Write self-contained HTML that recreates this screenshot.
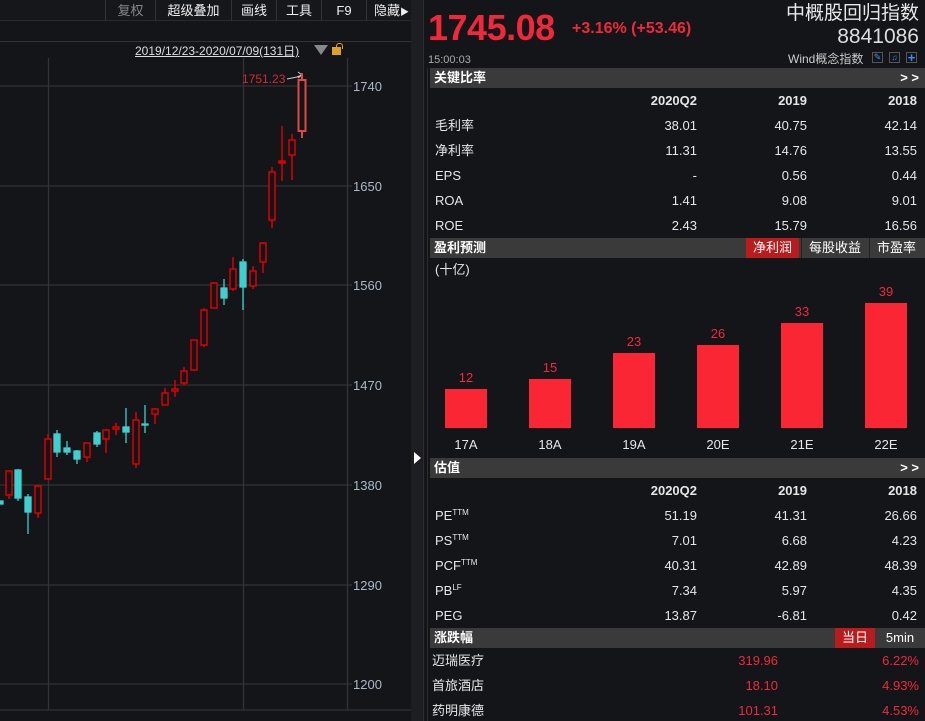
<!DOCTYPE html>
<html><head><meta charset="utf-8"><style>
*{margin:0;padding:0;box-sizing:border-box}
body{width:925px;height:721px;background:#131519;overflow:hidden;position:relative;font-family:"Liberation Sans","Noto Sans CJK SC",sans-serif;color:#e6e6e6;font-size:13px}
.a{position:absolute;white-space:nowrap;line-height:16px}
.bar{position:absolute;left:430px;width:495px;height:20px;background:#3a3a3a;font-weight:bold;font-size:13px;line-height:20px;padding-left:4px;color:#fff}
.r{text-align:right}
.tb{position:absolute;top:0;height:21px;line-height:21px;font-size:13px;color:#eee;text-align:center;border-left:1px solid #333}
sup{font-size:8px;line-height:0;vertical-align:5px}
</style></head><body>
<div class="a" style="left:0;top:0;width:411px;height:21px;background:#16171b;border-bottom:1px solid #2a2a2a"></div>
<div class="tb" style="left:105px;width:50px;color:#888">复权</div>
<div class="tb" style="left:155px;width:76px">超级叠加</div>
<div class="tb" style="left:231px;width:45px">画线</div>
<div class="tb" style="left:276px;width:45px">工具</div>
<div class="tb" style="left:321px;width:45px">F9</div>
<div class="tb" style="left:366px;width:45px;text-align:left;padding-left:7px">隐藏<span style="font-size:9px">▶</span></div>
<div class="a" style="left:0;top:21px;width:411px;height:21px;background:#131519;border-bottom:1px solid #333"></div>
<div class="a" style="left:135px;top:43px;font-size:12px;color:#ddd;text-decoration:underline">2019/12/23-2020/07/09(131日)</div>
<div class="a" style="left:314px;top:45px;width:0;height:0;border-left:7px solid transparent;border-right:7px solid transparent;border-top:10px solid #888"></div>
<div class="a" style="left:332px;top:47px;width:9px;height:8px;background:#e0a020"></div>
<div class="a" style="left:336px;top:43px;width:7px;height:6px;border:1.5px solid #e0a020;border-bottom:none;border-radius:3px 3px 0 0"></div>
<svg class="a" style="left:0;top:42px" width="411" height="679" viewBox="0 42 411 679">
<g stroke="#333" stroke-width="1.3">
<line x1="0" y1="86" x2="352" y2="86"/><line x1="0" y1="186" x2="352" y2="186"/><line x1="0" y1="285" x2="352" y2="285"/><line x1="0" y1="385" x2="352" y2="385"/><line x1="0" y1="485" x2="352" y2="485"/><line x1="0" y1="585" x2="352" y2="585"/><line x1="0" y1="684" x2="352" y2="684"/>
<line x1="48.5" y1="58" x2="48.5" y2="710"/><line x1="243.5" y1="58" x2="243.5" y2="710"/><line x1="347.5" y1="58" x2="347.5" y2="710"/>
<line x1="0" y1="710" x2="411" y2="710"/>
</g>
<g fill="#aab8c8" font-size="13" font-family="Liberation Sans">
<text x="353" y="91">1740</text><text x="353" y="191">1650</text><text x="353" y="290">1560</text><text x="353" y="390">1470</text><text x="353" y="490">1380</text><text x="353" y="590">1290</text><text x="353" y="689">1200</text>
</g>
<text x="242" y="83" fill="#d42a2a" font-size="12" font-family="Liberation Sans">1751.23</text>
<path d="M287 79 L297 77 L302 75 M298 72 L302 75 L298 78" stroke="#ccc" fill="none" stroke-width="1"/>
<g stroke="#d00" stroke-width="1.5" fill="none">
<line x1="9" y1="471" x2="9" y2="499"/><rect x="6" y="471" width="6" height="24" fill="#131519"/>
<line x1="38" y1="486" x2="38" y2="518"/><rect x="35" y="486" width="6" height="27" fill="#131519"/>
<line x1="48" y1="434" x2="48" y2="479"/><rect x="45" y="439" width="6" height="40" fill="#131519"/>
<line x1="87" y1="443" x2="87" y2="462"/><rect x="84" y="443" width="6" height="14" fill="#131519"/>
<line x1="106" y1="429" x2="106" y2="453"/><rect x="103" y="430" width="6" height="9" fill="#131519"/>
<line x1="116" y1="423" x2="116" y2="435"/><rect x="113" y="427" width="6" height="2" fill="#131519"/>
<line x1="136" y1="412" x2="136" y2="468"/><rect x="133" y="420" width="6" height="44" fill="#131519"/>
<line x1="155" y1="408" x2="155" y2="424"/><rect x="152" y="409" width="6" height="5" fill="#131519"/>
<line x1="165" y1="388" x2="165" y2="405"/><rect x="162" y="393" width="6" height="12" fill="#131519"/>
<line x1="175" y1="380" x2="175" y2="397"/><rect x="172" y="389" width="6" height="2" fill="#131519"/>
<line x1="184" y1="367" x2="184" y2="385"/><rect x="181" y="371" width="6" height="12" fill="#131519"/>
<line x1="194" y1="340" x2="194" y2="371"/><rect x="191" y="340" width="6" height="30" fill="#131519"/>
<line x1="204" y1="308" x2="204" y2="347"/><rect x="201" y="310" width="6" height="35" fill="#131519"/>
<line x1="214" y1="282" x2="214" y2="308"/><rect x="211" y="283" width="6" height="25" fill="#131519"/>
<line x1="233" y1="257" x2="233" y2="291"/><rect x="230" y="269" width="6" height="20" fill="#131519"/>
<line x1="253" y1="266" x2="253" y2="289"/><rect x="250" y="271" width="6" height="15" fill="#131519"/>
<line x1="263" y1="242" x2="263" y2="273"/><rect x="260" y="243" width="6" height="19" fill="#131519"/>
<line x1="272" y1="167" x2="272" y2="228"/><rect x="269" y="172" width="6" height="48" fill="#131519"/>
<line x1="282" y1="126" x2="282" y2="181"/><rect x="279" y="161" width="6" height="2" fill="#d00"/>
<line x1="292" y1="134" x2="292" y2="180"/><rect x="289" y="140" width="6" height="15" fill="#131519"/>
</g>
<g stroke="#e04848" stroke-width="2" fill="none"><line x1="302" y1="73" x2="302" y2="138"/><rect x="298.5" y="80" width="7" height="51" fill="#131519"/></g>
<g stroke="#3ecfcf" stroke-width="1.3" fill="#3ecfcf">
<rect x="-3" y="501" width="6" height="3"/>
<line x1="18" y1="469" x2="18" y2="501"/><rect x="15" y="470" width="6" height="28"/>
<line x1="28" y1="494" x2="28" y2="534"/><rect x="25" y="497" width="6" height="15"/>
<line x1="57" y1="430" x2="57" y2="457"/><rect x="54" y="434" width="6" height="18"/>
<line x1="67" y1="441" x2="67" y2="455"/><rect x="64" y="448" width="6" height="4"/>
<line x1="77" y1="450" x2="77" y2="464"/><rect x="74" y="451" width="6" height="8"/>
<line x1="97" y1="431" x2="97" y2="447"/><rect x="94" y="433" width="6" height="11"/>
<line x1="126" y1="408" x2="126" y2="443"/><rect x="123" y="427" width="6" height="5"/>
<line x1="145" y1="405" x2="145" y2="433"/><rect x="142" y="424" width="6" height="1"/>
<line x1="224" y1="279" x2="224" y2="305"/><rect x="221" y="288" width="6" height="10"/>
<line x1="243" y1="259" x2="243" y2="310"/><rect x="240" y="262" width="6" height="25"/>
</g>
</svg>
<div class="a" style="left:411px;top:0;width:12px;height:721px;background:#1d1e22"></div>
<div class="a" style="left:414px;top:452px;width:0;height:0;border-top:6px solid transparent;border-bottom:6px solid transparent;border-left:7px solid #fff"></div>
<div class="a" style="left:423px;top:0;width:1px;height:721px;background:#2c2c2c"></div>
<div class="a" style="left:427px;top:68px;width:1px;height:653px;background:#2c2c2c"></div>
<div class="a" style="left:428px;top:8px;font-size:36px;line-height:40px;font-weight:bold;color:#f0283a;letter-spacing:-0.5px">1745.08</div>
<div class="a" style="left:572px;top:19px;font-size:16px;line-height:20px;font-weight:bold;color:#f0283a">+3.16% (+53.46)</div>
<div class="a" style="left:428px;top:52px;font-size:11px;color:#aaa">15:00:03</div>
<div class="a r" style="right:6px;top:2px;font-size:19px;line-height:24px;color:#e8e8e8">中概股回归指数</div>
<div class="a r" style="right:6px;top:24px;font-size:21px;line-height:26px;color:#ddd">8841086</div>
<div class="a" style="left:788px;top:51px;font-size:12px;color:#ccc">Wind概念指数</div>
<div class="a" style="left:872px;top:52px;width:11px;height:11px;border:1px solid #555;color:#3a8eff;font-size:9px;line-height:9px;text-align:center">✎</div>
<div class="a" style="left:889px;top:52px;width:11px;height:11px;border:1px solid #555;color:#3a8eff;font-size:8px;line-height:9px;text-align:center">♫</div>
<div class="a" style="left:906px;top:52px;width:11px;height:11px;border:1px solid #555;color:#3a8eff;font-size:13px;font-weight:bold;line-height:9px;text-align:center">+</div>
<div class="bar" style="top:68px">关键比率<span style="position:absolute;right:6px">&gt; &gt;</span></div>
<div class="a r" style="right:228px;top:93px;font-weight:bold">2020Q2</div>
<div class="a r" style="right:118px;top:93px;font-weight:bold">2019</div>
<div class="a r" style="right:8px;top:93px;font-weight:bold">2018</div>
<div class="a" style="left:435px;top:118px">毛利率</div><div class="a r" style="right:228px;top:118px">38.01</div><div class="a r" style="right:118px;top:118px">40.75</div><div class="a r" style="right:8px;top:118px">42.14</div>
<div class="a" style="left:435px;top:143px">净利率</div><div class="a r" style="right:228px;top:143px">11.31</div><div class="a r" style="right:118px;top:143px">14.76</div><div class="a r" style="right:8px;top:143px">13.55</div>
<div class="a" style="left:435px;top:168px">EPS</div><div class="a r" style="right:228px;top:168px">-</div><div class="a r" style="right:118px;top:168px">0.56</div><div class="a r" style="right:8px;top:168px">0.44</div>
<div class="a" style="left:435px;top:193px">ROA</div><div class="a r" style="right:228px;top:193px">1.41</div><div class="a r" style="right:118px;top:193px">9.08</div><div class="a r" style="right:8px;top:193px">9.01</div>
<div class="a" style="left:435px;top:218px">ROE</div><div class="a r" style="right:228px;top:218px">2.43</div><div class="a r" style="right:118px;top:218px">15.79</div><div class="a r" style="right:8px;top:218px">16.56</div>
<div class="bar" style="top:238px">盈利预测</div>
<div class="a" style="left:746px;top:238px;width:53px;height:20px;background:#b81c1c;color:#fff;text-align:center;line-height:20px">净利润</div>
<div class="a" style="left:801px;top:238px;width:67px;height:20px;background:#3a3a3a;color:#fff;text-align:center;line-height:20px;border-left:1px solid #222">每股收益</div>
<div class="a" style="left:869px;top:238px;width:54px;height:20px;background:#3a3a3a;color:#fff;text-align:center;line-height:20px;border-left:1px solid #222">市盈率</div>
<div class="a" style="left:435px;top:262px">(十亿)</div>
<div class="a" style="left:445px;top:389px;width:42px;height:39px;background:#fa2633"></div>
<div class="a" style="left:529px;top:379px;width:42px;height:49px;background:#fa2633"></div>
<div class="a" style="left:613px;top:353px;width:42px;height:75px;background:#fa2633"></div>
<div class="a" style="left:697px;top:345px;width:42px;height:83px;background:#fa2633"></div>
<div class="a" style="left:781px;top:323px;width:42px;height:105px;background:#fa2633"></div>
<div class="a" style="left:865px;top:303px;width:42px;height:125px;background:#fa2633"></div>
<div class="a" style="left:445px;top:370px;width:42px;text-align:center;color:#f0283a">12</div>
<div class="a" style="left:529px;top:360px;width:42px;text-align:center;color:#f0283a">15</div>
<div class="a" style="left:613px;top:334px;width:42px;text-align:center;color:#f0283a">23</div>
<div class="a" style="left:697px;top:326px;width:42px;text-align:center;color:#f0283a">26</div>
<div class="a" style="left:781px;top:304px;width:42px;text-align:center;color:#f0283a">33</div>
<div class="a" style="left:865px;top:284px;width:42px;text-align:center;color:#f0283a">39</div>
<div class="a" style="left:445px;top:437px;width:42px;text-align:center">17A</div>
<div class="a" style="left:529px;top:437px;width:42px;text-align:center">18A</div>
<div class="a" style="left:613px;top:437px;width:42px;text-align:center">19A</div>
<div class="a" style="left:697px;top:437px;width:42px;text-align:center">20E</div>
<div class="a" style="left:781px;top:437px;width:42px;text-align:center">21E</div>
<div class="a" style="left:865px;top:437px;width:42px;text-align:center">22E</div>
<div class="bar" style="top:458px">估值<span style="position:absolute;right:6px">&gt; &gt;</span></div>
<div class="a r" style="right:228px;top:483px;font-weight:bold">2020Q2</div>
<div class="a r" style="right:118px;top:483px;font-weight:bold">2019</div>
<div class="a r" style="right:8px;top:483px;font-weight:bold">2018</div>
<div class="a" style="left:435px;top:508px">PE<sup>TTM</sup></div><div class="a r" style="right:228px;top:508px">51.19</div><div class="a r" style="right:118px;top:508px">41.31</div><div class="a r" style="right:8px;top:508px">26.66</div>
<div class="a" style="left:435px;top:533px">PS<sup>TTM</sup></div><div class="a r" style="right:228px;top:533px">7.01</div><div class="a r" style="right:118px;top:533px">6.68</div><div class="a r" style="right:8px;top:533px">4.23</div>
<div class="a" style="left:435px;top:558px">PCF<sup>TTM</sup></div><div class="a r" style="right:228px;top:558px">40.31</div><div class="a r" style="right:118px;top:558px">42.89</div><div class="a r" style="right:8px;top:558px">48.39</div>
<div class="a" style="left:435px;top:583px">PB<sup>LF</sup></div><div class="a r" style="right:228px;top:583px">7.34</div><div class="a r" style="right:118px;top:583px">5.97</div><div class="a r" style="right:8px;top:583px">4.35</div>
<div class="a" style="left:435px;top:608px">PEG</div><div class="a r" style="right:228px;top:608px">13.87</div><div class="a r" style="right:118px;top:608px">-6.81</div><div class="a r" style="right:8px;top:608px">0.42</div>
<div class="bar" style="top:628px">涨跌幅</div>
<div class="a" style="left:835px;top:628px;width:40px;height:20px;background:#b81c1c;color:#fff;text-align:center;line-height:20px">当日</div>
<div class="a" style="left:877px;top:628px;width:46px;height:20px;background:#3a3a3a;color:#fff;text-align:center;line-height:20px">5min</div>
<div class="a" style="left:432px;top:653px">迈瑞医疗</div><div class="a r" style="right:147px;top:653px;color:#f0283a">319.96</div><div class="a r" style="right:6px;top:653px;color:#f0283a">6.22%</div>
<div class="a" style="left:432px;top:678px">首旅酒店</div><div class="a r" style="right:147px;top:678px;color:#f0283a">18.10</div><div class="a r" style="right:6px;top:678px;color:#f0283a">4.93%</div>
<div class="a" style="left:432px;top:703px">药明康德</div><div class="a r" style="right:147px;top:703px;color:#f0283a">101.31</div><div class="a r" style="right:6px;top:703px;color:#f0283a">4.53%</div>
</body></html>
